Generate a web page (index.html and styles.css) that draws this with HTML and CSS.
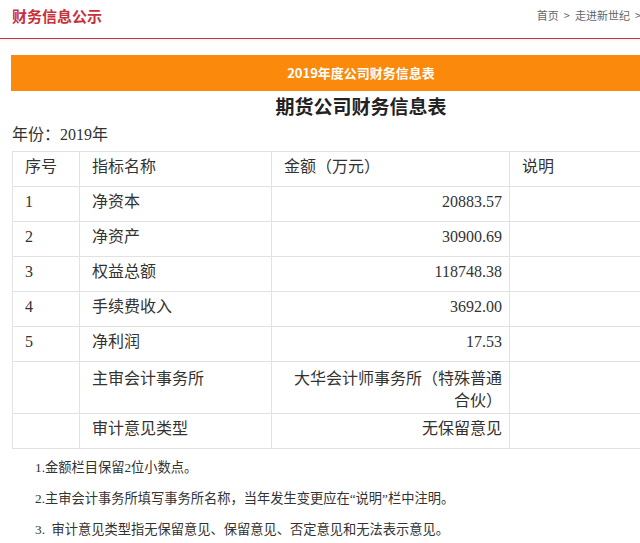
FILE: index.html
```html
<!DOCTYPE html>
<html lang="zh">
<head>
<meta charset="utf-8">
<title>财务信息公示</title>
<link rel="stylesheet" href="styles.css">
</head>
<body>
<header class="topbar">
  <div class="topbar-inner">
    <h1 class="site-title">财务信息公示</h1>
    <nav class="crumbs">首页<span class="sep">&gt;</span>走进新世纪<span class="sep">&gt;</span>财务信息公示</nav>
  </div>
</header>
<main class="main">
  <div class="banner">2019年度公司财务信息表</div>
  <h2 class="title">期货公司财务信息表</h2>
  <p class="year">年份：2019年</p>
  <table class="fin">
    <colgroup>
      <col class="c1"><col class="c2"><col class="c3"><col class="c4">
    </colgroup>
    <tr><td>序号</td><td>指标名称</td><td>金额（万元）</td><td>说明</td></tr>
    <tr><td>1</td><td>净资本</td><td class="num">20883.57</td><td></td></tr>
    <tr><td>2</td><td>净资产</td><td class="num">30900.69</td><td></td></tr>
    <tr><td>3</td><td>权益总额</td><td class="num">118748.38</td><td></td></tr>
    <tr><td>4</td><td>手续费收入</td><td class="num">3692.00</td><td></td></tr>
    <tr><td>5</td><td>净利润</td><td class="num">17.53</td><td></td></tr>
    <tr class="two"><td></td><td>主审会计事务所</td><td class="num">大华会计师事务所（特殊普通合伙）</td><td></td></tr>
    <tr><td></td><td>审计意见类型</td><td class="num">无保留意见</td><td></td></tr>
  </table>
  <div class="notes">
    <p>1.金额栏目保留2位小数点。</p>
    <p>2.主审会计事务所填写事务所名称，当年发生变更应在“说明”栏中注明。</p>
    <p>3.&nbsp; 审计意见类型指无保留意见、保留意见、否定意见和无法表示意见。</p>
  </div>
</main>
</body>
</html>
```
FILE: styles.css
```css
html, body {
  margin: 0;
  padding: 0;
  background: #fff;
  overflow: hidden;
}
body {
  font-family: "Liberation Serif", "Noto Sans CJK SC", serif;
  color: #333;
}
.topbar {
  height: 38px;
  border-bottom: 1px solid #d3303c;
  box-shadow: 0 1px 2px rgba(0, 0, 0, 0.06);
}
.topbar-inner {
  width: 700px;
  margin-left: 12px;
  height: 38px;
  display: flex;
  justify-content: space-between;
  align-items: flex-start;
}
.site-title {
  margin: 0;
  padding-top: 5px;
  font-family: "Noto Sans CJK SC", sans-serif;
  font-size: 15px;
  line-height: 22px;
  font-weight: bold;
  color: #c8303b;
}
.crumbs {
  padding-top: 6px;
  font-family: "Noto Sans CJK SC", sans-serif;
  font-size: 11px;
  line-height: 18px;
  color: #666;
  white-space: nowrap;
}
.sep {
  margin: 0 5px;
}
.main {
  width: 700px;
  margin-left: 11px;
  padding-top: 16px;
}
.banner {
  height: 36px;
  line-height: 36px;
  background: #fb8a0c;
  color: #fff;
  text-align: center;
  font-family: "Noto Sans CJK SC", sans-serif;
  font-size: 13px;
  font-weight: bold;
}
.title {
  margin: 0;
  height: 30px;
  line-height: 30px;
  text-align: center;
  font-family: "Noto Sans CJK SC", sans-serif;
  font-size: 19px;
  font-weight: bold;
  color: #222;
}
.year {
  margin: 0 0 2px 1px;
  height: 28px;
  line-height: 28px;
  font-size: 16px;
  color: #333;
}
.fin {
  margin-left: 1px;
  width: 699px;
  border-collapse: collapse;
  table-layout: fixed;
  font-size: 16px;
  color: #333;
}
.c1 { width: 67px; }
.c2 { width: 192px; }
.c3 { width: 238px; }
.c4 { width: 202px; }
.fin td {
  border: 1px solid #e2e2e2;
  padding: 4px 7px 8px 12px;
  line-height: 22px;
  vertical-align: top;
}
.fin tr.two td {
  padding-top: 6px;
  padding-bottom: 1px;
}
.fin td.num {
  text-align: right;
}
.notes {
  padding-left: 24px;
  padding-top: 3px;
  font-size: 13.25px;
  color: #333;
}
.notes p {
  margin: 0;
  line-height: 31px;
}
```
